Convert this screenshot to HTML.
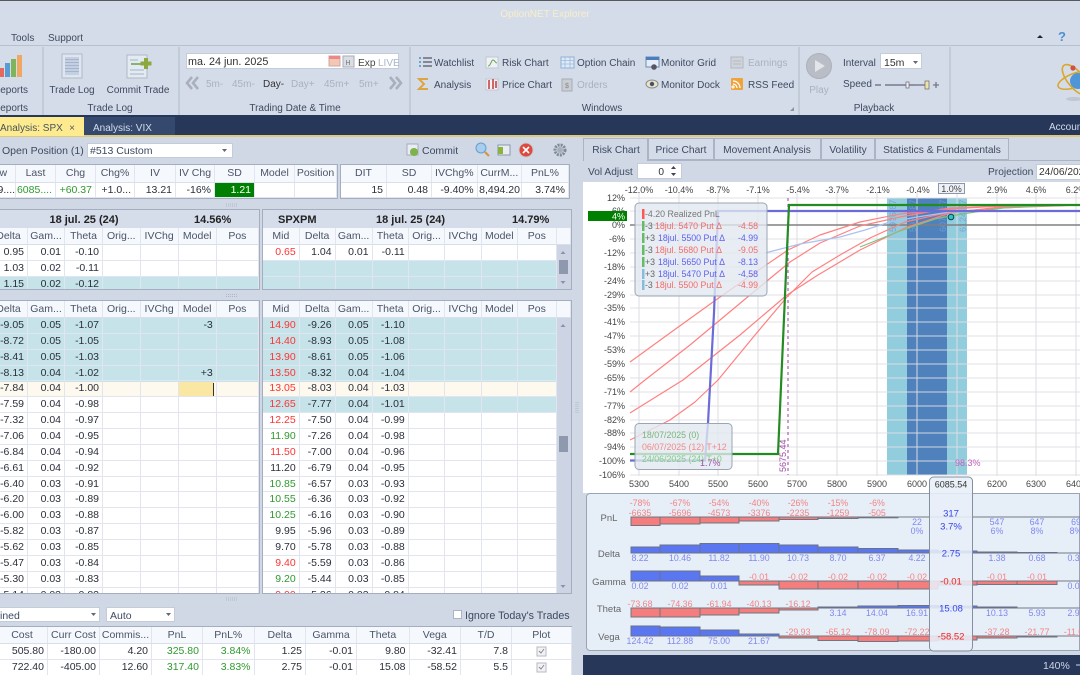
<!DOCTYPE html>
<html><head><meta charset="utf-8"><title>OptionNET Explorer</title>
<style>
html,body{margin:0;padding:0;width:1080px;height:675px;overflow:hidden;background:#d0d8e6}
body{position:relative;font-family:"Liberation Sans",sans-serif;font-size:10.5px;color:#2a2f3a}
#root{position:absolute;left:0;top:0;width:1080px;height:675px;overflow:hidden;filter:blur(.35px);background:#d0d8e6}
.a{position:absolute;box-sizing:border-box}
.g{position:absolute;display:grid}
.g>i{font-style:normal;text-align:right;padding-right:3px;line-height:15px;border-right:1px solid #e0e5f0;border-bottom:1px solid #e0e5f0;overflow:hidden;white-space:nowrap;box-sizing:border-box;color:#2a2f3a}
.h>i{text-align:center;padding:0;background:#f5f8fc;color:#4a5568;line-height:16px;border-bottom:1px solid #d8deea}
.g>b{font-weight:normal;text-align:right;padding-right:3px;line-height:15px;border-right:1px solid #e0e5f0;border-bottom:1px solid #e0e5f0;overflow:hidden;white-space:nowrap;box-sizing:border-box;color:#f33}
.g>u{text-decoration:none;text-align:right;padding-right:3px;line-height:15px;border-right:1px solid #e0e5f0;border-bottom:1px solid #e0e5f0;overflow:hidden;white-space:nowrap;box-sizing:border-box;color:#2e9a2e}
.p{border:1px solid #a4aebf;background:#fff;overflow:hidden}
svg{position:absolute;left:0;top:0}
text{font-family:"Liberation Sans",sans-serif}
.r{font-size:10px;fill:#3c4a60}
.d{font-size:10px;fill:#a9b1bf}
.k{font-size:9px;fill:#444}
.b{font-size:8.8px;fill:#8088f0}
.n{font-size:8.8px;fill:#f58484}
.l{font-size:9.5px;fill:#666}
.m{text-anchor:middle}
.e{text-anchor:end}
</style></head><body><div id="root">

<!-- base regions -->
<div class="a" style="left:0;top:0;width:1080px;height:1px;background:#55585f"></div>
<div class="a" style="left:0;top:1px;width:1080px;height:114px;background:#d5dce9"></div>
<div class="a" style="left:0;top:45px;width:1080px;height:1px;background:#b7c0cf"></div>
<div class="a" style="left:0;top:115px;width:1080px;height:20px;background:#27375a"></div>
<div class="a" style="left:0;top:135px;width:1080px;height:2px;background:#dcc97e"></div>
<div class="a" style="left:0;top:117px;width:84px;height:19px;background:#ffeb8f"></div>
<div class="a" style="left:84px;top:117px;width:91px;height:18px;background:#34496d"></div>

<!-- top grid 1 -->
<div class="a p" style="left:-1px;top:164px;width:339px;height:35px"></div>
<div class="g h" style="left:-20px;top:165px;grid-template-columns:36px 40px 40px 39px 41px 39px 40px 40px 42px;grid-template-rows:18px">
<i>Low</i><i>Last</i><i>Chg</i><i>Chg%</i><i>IV</i><i>IV Chg</i><i>SD</i><i>Model</i><i>Position</i></div>
<div class="g" style="left:-20px;top:183px;grid-template-columns:36px 40px 40px 39px 41px 39px 40px 40px 42px;grid-template-rows:15px">
<i>6079....</i><u>6085....</u><u>+60.37</u><i>+1.0...</i><i>13.21</i><i>-16%</i><i style="background:#008000;color:#fff">1.21</i><i></i><i></i></div>
<!-- top grid 2 -->
<div class="a p" style="left:340px;top:164px;width:230px;height:35px"></div>
<div class="g h" style="left:341px;top:165px;grid-template-columns:46px 45px 45.6px 44.4px 47px;grid-template-rows:18px">
<i>DIT</i><i>SD</i><i>IVChg%</i><i>CurrM...</i><i>PnL%</i></div>
<div class="g" style="left:341px;top:183px;grid-template-columns:46px 45px 45.6px 44.4px 47px;grid-template-rows:15px">
<i>15</i><i>0.48</i><i>-9.40%</i><i style="padding-right:1px">8,494.20</i><i>3.74%</i></div>

<!-- upper panel left -->
<div class="a p" style="left:-2px;top:209px;width:262px;height:81px"></div>
<div class="a" style="left:0;top:210px;width:259px;height:18px;background:#d5dcea"></div>
<div class="a" style="left:0;top:277px;width:259px;height:12px;background:#c5e3e8"></div>
<div class="g h" style="left:-10px;top:228px;grid-template-columns:38px 37px 38px 37.6px 38.1px 38.1px 42.2px;grid-template-rows:17px"><i>Delta</i><i>Gam...</i><i>Theta</i><i>Orig...</i><i>IVChg</i><i>Model</i><i>Pos</i></div>
<div class="a" style="left:-10px;top:245px;width:269px;height:44px;overflow:hidden"><div class="g" style="left:0;top:0;grid-template-columns:38px 37px 38px 37.6px 38.1px 38.1px 42.2px;grid-auto-rows:15.87px">
<i>0.95</i><i>0.01</i><i>-0.10</i><i></i><i></i><i></i><i></i>
<i>1.03</i><i>0.02</i><i>-0.11</i><i></i><i></i><i></i><i></i>
<i>1.15</i><i>0.02</i><i>-0.12</i><i></i><i></i><i></i><i></i>
</div></div>

<!-- upper panel right -->
<div class="a p" style="left:262px;top:209px;width:310px;height:81px"></div>
<div class="a" style="left:263px;top:210px;width:308px;height:18px;background:#d5dcea"></div>
<div class="a" style="left:263px;top:261px;width:294px;height:28px;background:#c5e3e8"></div>
<div class="a" style="left:557px;top:245px;width:14px;height:44px;background:#cdd5e4"></div>
<div class="g h" style="left:263px;top:228px;grid-template-columns:36.7px 35.9px 37px 36.2px 36.6px 36.3px 36.3px 38.8px 14px;grid-template-rows:17px"><i>Mid</i><i>Delta</i><i>Gam...</i><i>Theta</i><i>Orig...</i><i>IVChg</i><i>Model</i><i>Pos</i><i></i></div>
<div class="a" style="left:263px;top:245px;width:294px;height:44px;overflow:hidden"><div class="g" style="left:0;top:0;grid-template-columns:36.7px 35.9px 37px 36.2px 36.6px 36.3px 36.3px 38.8px;grid-auto-rows:15.87px">
<b>0.65</b><i>1.04</i><i>0.01</i><i>-0.11</i><i></i><i></i><i></i><i></i>
<i></i><i></i><i></i><i></i><i></i><i></i><i></i><i></i>
<i></i><i></i><i></i><i></i><i></i><i></i><i></i><i></i>
</div></div>

<!-- lower panel left -->
<div class="a p" style="left:-2px;top:300px;width:262px;height:294px"></div>
<div class="a" style="left:0;top:318px;width:259px;height:63.5px;background:#c5e3e8"></div>
<div class="a" style="left:0;top:381.5px;width:259px;height:15.9px;background:#fdf9ee"></div>
<div class="a" style="left:179px;top:381.5px;width:35px;height:15px;background:#fbe7a4"></div>
<div class="a" style="left:213px;top:382.5px;width:1px;height:13px;background:#333"></div>
<div class="g h" style="left:-10px;top:301px;grid-template-columns:38px 37px 38px 37.6px 38.1px 38.1px 42.2px;grid-template-rows:17px"><i>Delta</i><i>Gam...</i><i>Theta</i><i>Orig...</i><i>IVChg</i><i>Model</i><i>Pos</i></div>
<div class="a" style="left:-10px;top:318px;width:269px;height:275px;overflow:hidden"><div class="g" style="left:0;top:0;grid-template-columns:38px 37px 38px 37.6px 38.1px 38.1px 42.2px;grid-auto-rows:15.87px">
<i>-9.05</i><i>0.05</i><i>-1.07</i><i></i><i></i><i>-3</i><i></i>
<i>-8.72</i><i>0.05</i><i>-1.05</i><i></i><i></i><i></i><i></i>
<i>-8.41</i><i>0.05</i><i>-1.03</i><i></i><i></i><i></i><i></i>
<i>-8.13</i><i>0.04</i><i>-1.02</i><i></i><i></i><i>+3</i><i></i>
<i>-7.84</i><i>0.04</i><i>-1.00</i><i></i><i></i><i></i><i></i>
<i>-7.59</i><i>0.04</i><i>-0.98</i><i></i><i></i><i></i><i></i>
<i>-7.32</i><i>0.04</i><i>-0.97</i><i></i><i></i><i></i><i></i>
<i>-7.06</i><i>0.04</i><i>-0.95</i><i></i><i></i><i></i><i></i>
<i>-6.84</i><i>0.04</i><i>-0.94</i><i></i><i></i><i></i><i></i>
<i>-6.61</i><i>0.04</i><i>-0.92</i><i></i><i></i><i></i><i></i>
<i>-6.40</i><i>0.03</i><i>-0.91</i><i></i><i></i><i></i><i></i>
<i>-6.20</i><i>0.03</i><i>-0.89</i><i></i><i></i><i></i><i></i>
<i>-6.00</i><i>0.03</i><i>-0.88</i><i></i><i></i><i></i><i></i>
<i>-5.82</i><i>0.03</i><i>-0.87</i><i></i><i></i><i></i><i></i>
<i>-5.62</i><i>0.03</i><i>-0.85</i><i></i><i></i><i></i><i></i>
<i>-5.47</i><i>0.03</i><i>-0.84</i><i></i><i></i><i></i><i></i>
<i>-5.30</i><i>0.03</i><i>-0.83</i><i></i><i></i><i></i><i></i>
<i>-5.14</i><i>0.03</i><i>-0.82</i><i></i><i></i><i></i><i></i>
</div></div>

<!-- lower panel right -->
<div class="a p" style="left:262px;top:300px;width:310px;height:294px"></div>
<div class="a" style="left:263px;top:318px;width:294px;height:63.5px;background:#c5e3e8"></div>
<div class="a" style="left:263px;top:381.5px;width:294px;height:15.9px;background:#fdf9ee"></div>
<div class="a" style="left:263px;top:397.4px;width:294px;height:15.9px;background:#c5e3e8"></div>
<div class="a" style="left:557px;top:318px;width:14px;height:275px;background:#cdd5e4"></div>
<div class="g h" style="left:263px;top:301px;grid-template-columns:36.7px 35.9px 37px 36.2px 36.6px 36.3px 36.3px 38.8px 14px;grid-template-rows:17px"><i>Mid</i><i>Delta</i><i>Gam...</i><i>Theta</i><i>Orig...</i><i>IVChg</i><i>Model</i><i>Pos</i><i></i></div>
<div class="a" style="left:263px;top:318px;width:294px;height:275px;overflow:hidden"><div class="g" style="left:0;top:0;grid-template-columns:36.7px 35.9px 37px 36.2px 36.6px 36.3px 36.3px 38.8px;grid-auto-rows:15.87px">
<b>14.90</b><i>-9.26</i><i>0.05</i><i>-1.10</i><i></i><i></i><i></i><i></i>
<b>14.40</b><i>-8.93</i><i>0.05</i><i>-1.08</i><i></i><i></i><i></i><i></i>
<b>13.90</b><i>-8.61</i><i>0.05</i><i>-1.06</i><i></i><i></i><i></i><i></i>
<b>13.50</b><i>-8.32</i><i>0.04</i><i>-1.04</i><i></i><i></i><i></i><i></i>
<b>13.05</b><i>-8.03</i><i>0.04</i><i>-1.03</i><i></i><i></i><i></i><i></i>
<b>12.65</b><i>-7.77</i><i>0.04</i><i>-1.01</i><i></i><i></i><i></i><i></i>
<b>12.25</b><i>-7.50</i><i>0.04</i><i>-0.99</i><i></i><i></i><i></i><i></i>
<u>11.90</u><i>-7.26</i><i>0.04</i><i>-0.98</i><i></i><i></i><i></i><i></i>
<b>11.50</b><i>-7.00</i><i>0.04</i><i>-0.96</i><i></i><i></i><i></i><i></i>
<i>11.20</i><i>-6.79</i><i>0.04</i><i>-0.95</i><i></i><i></i><i></i><i></i>
<u>10.85</u><i>-6.57</i><i>0.03</i><i>-0.93</i><i></i><i></i><i></i><i></i>
<u>10.55</u><i>-6.36</i><i>0.03</i><i>-0.92</i><i></i><i></i><i></i><i></i>
<u>10.25</u><i>-6.16</i><i>0.03</i><i>-0.90</i><i></i><i></i><i></i><i></i>
<i>9.95</i><i>-5.96</i><i>0.03</i><i>-0.89</i><i></i><i></i><i></i><i></i>
<i>9.70</i><i>-5.78</i><i>0.03</i><i>-0.88</i><i></i><i></i><i></i><i></i>
<b>9.40</b><i>-5.59</i><i>0.03</i><i>-0.86</i><i></i><i></i><i></i><i></i>
<u>9.20</u><i>-5.44</i><i>0.03</i><i>-0.85</i><i></i><i></i><i></i><i></i>
<b>9.00</b><i>-5.26</i><i>0.03</i><i>-0.84</i><i></i><i></i><i></i><i></i>
</div></div>

<!-- bottom table -->
<div class="a" style="left:0;top:626px;width:572px;height:49px;background:#fff;border:1px solid #a4aebf;border-left:0;border-bottom:0"></div>
<div class="g h" style="left:-3px;top:627px;grid-template-columns:51px 52px 52px 51px 51.5px 51.5px 51px 52.5px 51.5px 51px 59.5px;grid-template-rows:17px"><i>Cost</i><i>Curr Cost</i><i>Commis...</i><i>PnL</i><i>PnL%</i><i>Delta</i><i>Gamma</i><i>Theta</i><i>Vega</i><i>T/D</i><i>Plot</i></div>
<div class="g" style="left:-3px;top:644px;grid-template-columns:51px 52px 52px 51px 51.5px 51.5px 51px 52.5px 51.5px 51px 59.5px;grid-auto-rows:16px">
<i>505.80</i><i>-180.00</i><i>4.20</i><u>325.80</u><u>3.84%</u><i>1.25</i><i>-0.01</i><i>9.80</i><i>-32.41</i><i>7.8</i><i></i>
<i>722.40</i><i>-405.00</i><i>12.60</i><u>317.40</u><u>3.83%</u><i>2.75</i><i>-0.01</i><i>15.08</i><i>-58.52</i><i>5.5</i><i></i>
</div>

<!-- right panel bases -->
<div class="a" style="left:583px;top:182px;width:497px;height:311px;background:#fff"></div>
<div class="a" style="left:583px;top:160px;width:497px;height:1px;background:#aab4c4"></div>
<div class="a" style="left:583px;top:138px;width:65px;height:23px;background:#d0d8e6;border:1px solid #aab4c4;border-bottom:0"></div>
<div class="a" style="left:648px;top:138px;width:66px;height:22px;background:#d5dce9;border:1px solid #aab4c4"></div>
<div class="a" style="left:714px;top:138px;width:107px;height:22px;background:#d5dce9;border:1px solid #aab4c4"></div>
<div class="a" style="left:821px;top:138px;width:54px;height:22px;background:#d5dce9;border:1px solid #aab4c4"></div>
<div class="a" style="left:875px;top:138px;width:134px;height:22px;background:#d5dce9;border:1px solid #aab4c4"></div>
<div class="a" style="left:637px;top:163px;width:45px;height:16px;background:#fff;border:1px solid #c4ccd9"></div>
<div class="a" style="left:1036px;top:164px;width:50px;height:16px;background:#fff;border:1px solid #c4ccd9"></div>
<div class="a" style="left:586px;top:493px;width:494px;height:158px;background:#e6eef8;border:1px solid #9aa4b4;border-radius:4px 0 0 4px"></div>
<div class="a" style="left:583px;top:655px;width:497px;height:20px;background:#27375a"></div>

<!-- form boxes -->
<div class="a" style="left:186px;top:53px;width:213px;height:16px;background:#fff;border:1px solid #c4ccd9"></div>
<div class="a" style="left:880px;top:53px;width:42px;height:16px;background:#fff;border:1px solid #c4ccd9"></div>
<div class="a" style="left:87px;top:143px;width:146px;height:15px;background:#fff;border:1px solid #c4ccd9"></div>
<div class="a" style="left:-2px;top:607px;width:102px;height:15px;background:#fff;border:1px solid #c4ccd9"></div>
<div class="a" style="left:106px;top:607px;width:69px;height:15px;background:#fff;border:1px solid #c4ccd9"></div>
<div class="a" style="left:453px;top:610px;width:9px;height:9px;background:#fff;border:1px solid #aab4c4"></div>

<svg width="1080" height="675" viewBox="0 0 1080 675">
<!-- title / menu -->
<text x="545" y="17" class="m" font-size="10" fill="#f6eecb">OptionNET Explorer</text>
<text x="11" y="41" class="r">Tools</text><text x="48" y="41" class="r">Support</text>
<path d="M1037 38h6l-3-3z" fill="#222"/>
<text x="1062" y="41" class="m" font-size="13" font-weight="bold" fill="#4d8fd0">?</text>

<!-- ribbon separators -->
<path d="M43 47V115M179 47V115M410 47V115M799 47V115M950 47V115" stroke="#bcc5d3" stroke-width="1.5"/>
<!-- reports icon -->
<rect x="-1" y="68" width="5" height="9" fill="#e56a5d"/><rect x="5" y="63" width="5" height="14" fill="#5a9bd3"/>
<rect x="11" y="59" width="5" height="18" fill="#7eb55a"/><rect x="17" y="55" width="5" height="22" fill="#f0a860"/>
<text x="-7" y="93" class="r">Reports</text><text x="-7" y="111" class="r">Reports</text>
<!-- trade log icon -->
<rect x="62" y="54" width="20" height="24" fill="#dfe6f0" stroke="#aeb8c8"/>
<rect x="65" y="57" width="14" height="18" fill="#c4d0e2"/>
<path d="M65 59.500h14M65 62.500h14M65 65.500h14M65 68.500h14M65 71.500h14" stroke="#a3b4cf" stroke-width="1"/>
<text x="72" y="93" class="r m">Trade Log</text>
<!-- commit trade icon -->
<rect x="127" y="55" width="20" height="23" fill="#e4eaf2" stroke="#aeb8c8"/>
<path d="M130 70h14M130 74h14M130 60h8" stroke="#b0bfd2" stroke-width="1.2"/>
<path d="M131 64h10" stroke="#6aa04a" stroke-width="1.5"/>
<path d="M146 58v11M140.500 63.500h11" stroke="#8fa83e" stroke-width="4"/>
<text x="138" y="93" class="r m">Commit Trade</text>
<text x="110" y="111" class="r m">Trade Log</text>

<!-- trading date -->
<text x="188" y="65" font-size="10.8" fill="#333">ma. 24 jun. 2025</text>
<rect x="329" y="56" width="11" height="10" fill="#f4c6b4" stroke="#c9a9a4"/><rect x="329" y="56" width="11" height="3" fill="#e88"/>
<rect x="343" y="56" width="11" height="11" fill="#d9dde4" stroke="#aab"/><text x="348" y="65" class="m" font-size="7" fill="#777">H</text>
<text x="358" y="66" font-size="10.200" fill="#444">Exp</text><text x="378" y="66" font-size="10" fill="#a9b5c9">LIVE</text>
<path d="M192 77l-5 6 5 6M198 77l-5 6 5 6" fill="none" stroke="#a9b0bc" stroke-width="2.600"/>
<path d="M390 77l5 6-5 6M396 77l5 6-5 6" fill="none" stroke="#a9b0bc" stroke-width="2.600"/>
<text x="206" y="87" class="d">5m-</text><text x="232" y="87" class="d">45m-</text><text x="263" y="87" class="r" style="fill:#333">Day-</text>
<text x="291" y="87" class="d">Day+</text><text x="324" y="87" class="d">45m+</text><text x="359" y="87" class="d">5m+</text>
<text x="295" y="111" class="r m">Trading Date &amp; Time</text>

<!-- windows -->
<path d="M423 58h9M423 62h9M423 66h9" stroke="#556" stroke-width="1.200"/><path d="M419 58h2M419 62h2M419 66h2" stroke="#4a90c8" stroke-width="1.500"/>
<text x="434" y="66" class="r">Watchlist</text>
<path d="M428 79h-9l5 5-5 5h9" fill="none" stroke="#dba640" stroke-width="2"/>
<text x="434" y="88" class="r">Analysis</text>
<rect x="486" y="57" width="12" height="11" fill="#eef1f6" stroke="#c1c8d4"/><path d="M488 66c3 0 3-6 5-6s2 3 4 3" fill="none" stroke="#6aa04a"/>
<text x="502" y="66" class="r">Risk Chart</text>
<rect x="486" y="79" width="12" height="11" fill="#eef1f6" stroke="#c1c8d4"/><path d="M489 80v9M493 79v10M496 81v7" stroke="#c44" stroke-width="1.600"/>
<text x="502" y="88" class="r">Price Chart</text>
<rect x="561" y="57" width="13" height="11" fill="#dfeaf7" stroke="#8fb0d6"/><path d="M561 60.500h13M565 57v11M570 57v11M561 64h13" stroke="#9cb9da" stroke-width=".8"/>
<text x="577" y="66" class="r">Option Chain</text>
<rect x="562" y="79" width="10" height="12" fill="#c9cdd4" stroke="#a8adb5"/><text x="567" y="88" class="m" font-size="7" fill="#888">$</text>
<text x="577" y="88" class="d">Orders</text>
<rect x="646" y="57" width="13" height="10" fill="#e4edf7" stroke="#6b8cb5"/><rect x="646" y="57" width="13" height="3" fill="#4a7ebc"/><circle cx="654" cy="67" r="2.800" fill="#556"/>
<text x="661" y="66" class="r">Monitor Grid</text>
<ellipse cx="652" cy="84" rx="6" ry="4" fill="#e8e3d3" stroke="#8c8a7e"/><circle cx="652" cy="84" r="2.200" fill="#456"/>
<text x="661" y="88" class="r">Monitor Dock</text>
<rect x="731" y="57" width="12" height="11" fill="#d0d4da" stroke="#b3b8c0"/><path d="M733 61h8M733 64h8" stroke="#b3b8c0"/>
<text x="748" y="66" class="d">Earnings</text>
<rect x="731" y="78" width="12" height="12" rx="1" fill="#eea43a"/><path d="M733 88a1 1 0 1 1 .1 0M733 84a4 4 0 0 1 4 4M733 81a7 7 0 0 1 7 7" fill="none" stroke="#fff" stroke-width="1.200"/>
<text x="748" y="88" class="r">RSS Feed</text>
<text x="602" y="111" class="r m">Windows</text>
<path d="M794 111h-4l4-4z" fill="#8a94a5"/>

<!-- playback -->
<circle cx="819" cy="66" r="12.500" fill="#b9bdc6" stroke="#adb1ba"/><path d="M815 60l10 6-10 6z" fill="#e3e5ea"/>
<text x="819" y="93" class="d m">Play</text>
<text x="843" y="66" class="r">Interval</text><text x="884" y="66" font-size="10.500" fill="#333">15m</text><path d="M913 61h5l-2.500 3z" fill="#667"/>
<text x="843" y="87" class="r">Speed</text>
<path d="M875 85h6M885 85h30" stroke="#667" stroke-width="1.200"/><path d="M933 85h6M936 82v6" stroke="#778" stroke-width="1.300"/>
<rect x="906" y="82" width="3" height="6" fill="#eee" stroke="#667" stroke-width=".7"/><rect x="925" y="81" width="4" height="8" fill="#f0e3a0" stroke="#667" stroke-width=".7"/>
<path d="M915 85h10" stroke="#667" stroke-width="1.200"/>
<text x="874" y="111" class="r m">Playback</text>
<!-- atom logo -->
<ellipse cx="1076" cy="80" rx="19" ry="8" transform="rotate(50 1076 80)" fill="none" stroke="#d9a72a" stroke-width="1.600"/>
<ellipse cx="1076" cy="80" rx="19" ry="7" transform="rotate(-20 1076 80)" fill="none" stroke="#d9a72a" stroke-width="1.600"/>
<circle cx="1078" cy="81" r="8" fill="#4f96d8"/><circle cx="1073" cy="68" r="2.600" fill="#d3503c"/>
<ellipse cx="1074" cy="99" rx="8" ry="2" fill="#c0c6d2"/>

<!-- tabs bar -->
<text x="0" y="131" font-size="10" fill="#44545f">Analysis: SPX</text>
<text x="72" y="131" class="m" font-size="10" fill="#556">×</text>
<text x="93" y="131" font-size="10" fill="#d3dcea">Analysis: VIX</text>
<text x="1049" y="130" font-size="10" fill="#d3dcea">Account</text>

<!-- position toolbar -->
<text x="2" y="154" font-size="10.500" fill="#3c4a60">Open Position (1)</text>
<text x="90" y="154" font-size="10.500" fill="#3c4a60">#513 Custom</text><path d="M222 149h5l-2.500 3z" fill="#667"/>
<rect x="407" y="144" width="11" height="11" fill="#e8ecf3" stroke="#aab"/><circle cx="414" cy="152" r="4" fill="#7db24c"/>
<text x="422" y="154" font-size="10.500" fill="#3c4a60">Commit</text>
<circle cx="481" cy="148" r="5" fill="#a7cdef" stroke="#6a9dcc"/><path d="M485 152l4 4" stroke="#d59640" stroke-width="2.200"/>
<rect x="498" y="145" width="12" height="10" fill="#e9ecf2" stroke="#8a97a8"/><rect x="498" y="147" width="5" height="7" fill="#8cb33e"/>
<circle cx="526" cy="150" r="7" fill="#dc4a40" stroke="#c9c9c9"/><path d="M523 147l6 6M529 147l-6 6" stroke="#fff" stroke-width="1.600"/>
<circle cx="560" cy="150" r="5" fill="none" stroke="#7f8997" stroke-width="3" stroke-dasharray="2 1"/><circle cx="560" cy="150" r="3" fill="#a6afbc"/>

<!-- panel titles -->
<g font-size="11" font-weight="bold" fill="#222">
<text x="84" y="223" class="m">18 jul. 25 (24)</text><text x="194" y="223">14.56%</text>
<text x="278" y="223">SPXPM</text><text x="376" y="223">18 jul. 25 (24)</text><text x="512" y="223">14.79%</text></g>
<!-- scrollbars -->
<path d="M560.500 254h5l-2.500-3z" fill="#8a94a5"/><rect x="559" y="260" width="9" height="14" fill="#8f99ad"/><path d="M560.500 281h5l-2.500 3z" fill="#8a94a5"/>
<path d="M560.500 327h5l-2.500-3z" fill="#8a94a5"/><rect x="559" y="436" width="9" height="16" fill="#8f99ad"/><path d="M560.500 585h5l-2.500 3z" fill="#8a94a5"/>
<!-- splitter grips -->
<path d="M226 204h12M226 206h12M226 294.500h12M226 296.500h12M226 598h12M226 600h12" stroke="#aeb7c6" stroke-dasharray="1 1"/>
<path d="M576 402v12M578 402v12" stroke="#aeb7c6" stroke-dasharray="1 1"/>
<!-- combos text -->
<text x="0" y="619" font-size="10.500" fill="#3c4a60">ined</text><path d="M91 613h5l-2.500 3z" fill="#667"/>
<text x="110" y="619" font-size="10.500" fill="#3c4a60">Auto</text><path d="M166 613h5l-2.500 3z" fill="#667"/>
<text x="465" y="619" font-size="10.700" fill="#3c4a60">Ignore Today's Trades</text>
<!-- check boxes -->
<rect x="537" y="647" width="9" height="9" fill="#f3f3f5" stroke="#b4bac6"/><path d="M539 651l2 2 3-4" fill="none" stroke="#888"/>
<rect x="537" y="663" width="9" height="9" fill="#f3f3f5" stroke="#b4bac6"/><path d="M539 667l2 2 3-4" fill="none" stroke="#888"/>

<!-- right tabs text -->
<g font-size="10.200" fill="#3c4a60">
<text x="616" y="153" class="m">Risk Chart</text><text x="681" y="153" class="m">Price Chart</text><text x="767" y="153" class="m">Movement Analysis</text><text x="848" y="153" class="m">Volatility</text><text x="942" y="153" class="m">Statistics &amp; Fundamentals</text>
<text x="588" y="175">Vol Adjust</text><text x="664" y="175" class="e" fill="#333">0</text><text x="988" y="175">Projection</text><text x="1039" y="175" fill="#333">24/06/2025</text></g>
<path d="M671 169h5l-2.500-3zM671 173h5l-2.500 3z" fill="#445"/>

<!-- CHART -->
<rect x="887" y="198" width="80" height="277" fill="#92cddd"/>
<rect x="907" y="198" width="40" height="277" fill="#4f81bd"/>
<path d="M630 198H1080M630 211H1080M630 239H1080M630 253H1080M630 267H1080M630 281H1080M630 295H1080M630 308H1080M630 322H1080M630 336H1080M630 350H1080M630 364H1080M630 378H1080M630 392H1080M630 406H1080M630 420H1080M630 433H1080M630 447H1080M630 461H1080M630 475H1080" stroke="#dddde3" stroke-opacity=".75" stroke-width="1.300"/>
<path d="M639 192V476M679 192V476M718 192V476M758 192V476M797 192V476M837 192V476M877 192V476M917 192V476M957 192V476M997 192V476M1036 192V476M1076 192V476" stroke="#dddde3" stroke-opacity=".75" stroke-width="1.300"/>
<g font-size="9" fill="#6f9fd0" opacity=".85">
<text transform="translate(896,232) rotate(-90)">5926.87</text>
<text transform="translate(916,232) rotate(-90)">5976.87</text>
<text transform="translate(946,232) rotate(-90)">6074.87</text>
<text transform="translate(966,232) rotate(-90)">6124.87</text></g>
<path d="M630 225H1080" stroke="#808080" stroke-width="1.400"/>
<path d="M788 198V475" stroke="#b45fb4" stroke-width="1.200" stroke-dasharray="3 3"/>
<!-- red curves -->
<g fill="none" stroke="#ff8080" stroke-width="1.200" stroke-linejoin="round">
<polyline points="630,362 670,333 713,302 750,276 788,250 820,235 860,222 900,214 950,209 1000,206 1080,205"/>
<polyline points="630,392 645,380 690,345 750,295 790,262 820,243 860,226 900,217 950,208 1000,206 1080,205"/>
<polyline points="630,413 683,380 740,335 787,295 818,275 860,250 905,228 950,213 1000,207 1080,205"/>
<polyline points="630,440 670,420 695,402 718,380 755,335 787,297 812,272 840,255 870,238 905,222 950,212 1000,208 1080,205"/>
</g>
<polyline points="765,253 800,244 840,237 865,230 890,222 917,217 950,212 1000,211 1080,211" fill="none" stroke="#aac2f0" stroke-width="1.200"/>
<polyline points="860,247 880,239 900,231 917,225 935,219 950,216 975,212 1003,208 1040,206 1080,205" fill="none" stroke="#7ec27e" stroke-width="1.200"/>
<!-- main lines -->
<path d="M630 460.500H705L708 423 714 313 718 211H1080" fill="none" stroke="#6c6cd8" stroke-width="2.200"/>
<path d="M630 454H778L789 205H1080" fill="none" stroke="#228b22" stroke-width="2.200"/>
<circle cx="951" cy="217" r="2.800" fill="#2cc4c4" stroke="#144"/>
<!-- top labels -->
<text x="639" y="193" class="k m">-12.0%</text><text x="679" y="193" class="k m">-10.4%</text><text x="718" y="193" class="k m">-8.7%</text><text x="758" y="193" class="k m">-7.1%</text><text x="798" y="193" class="k m">-5.4%</text><text x="837" y="193" class="k m">-3.7%</text><text x="878" y="193" class="k m">-2.1%</text><text x="918" y="193" class="k m">-0.4%</text>
<text x="997" y="193" class="k m">2.9%</text><text x="1036" y="193" class="k m">4.6%</text><text x="1076" y="193" class="k m">6.2%</text>
<rect x="938.500" y="183.500" width="26" height="10" fill="#eef2f8" stroke="#8d97a9"/><text x="951.500" y="192" class="k m">1.0%</text>
<!-- y labels -->
<text x="625" y="201" class="k e">12%</text><text x="625" y="214" class="k e">6%</text><text x="625" y="228" class="k e">0%</text><text x="625" y="242" class="k e">-6%</text><text x="625" y="256" class="k e">-12%</text><text x="625" y="270" class="k e">-18%</text><text x="625" y="284" class="k e">-24%</text><text x="625" y="298" class="k e">-29%</text><text x="625" y="311" class="k e">-35%</text><text x="625" y="325" class="k e">-41%</text><text x="625" y="339" class="k e">-47%</text><text x="625" y="353" class="k e">-53%</text><text x="625" y="367" class="k e">-59%</text><text x="625" y="381" class="k e">-65%</text><text x="625" y="395" class="k e">-71%</text><text x="625" y="409" class="k e">-77%</text><text x="625" y="423" class="k e">-82%</text><text x="625" y="436" class="k e">-88%</text><text x="625" y="450" class="k e">-94%</text><text x="625" y="464" class="k e">-100%</text><text x="625" y="478" class="k e">-106%</text>
<rect x="588" y="211" width="39" height="10" fill="#008000"/><text x="625" y="219.500" class="k e" style="fill:#fff">4%</text>
<!-- x labels -->
<text x="639" y="487" class="k m">5300</text><text x="679" y="487" class="k m">5400</text><text x="718" y="487" class="k m">5500</text><text x="758" y="487" class="k m">5600</text><text x="797" y="487" class="k m">5700</text><text x="837" y="487" class="k m">5800</text><text x="877" y="487" class="k m">5900</text><text x="917" y="487" class="k m">6000</text><text x="997" y="487" class="k m">6200</text><text x="1036" y="487" class="k m">6300</text><text x="1076" y="487" class="k m">6400</text>
<text x="955" y="466" font-size="9" fill="#c060c0">98.3%</text>

<!-- legend 1 -->
<rect x="635" y="203" width="132" height="93" rx="4" fill="#e1e8f0" fill-opacity=".8" stroke="#9aa5b5"/>
<rect x="642" y="209" width="2.500" height="10" fill="#f55"/><rect x="642" y="221" width="2.500" height="10" fill="#6b6"/><rect x="642" y="233" width="2.500" height="10" fill="#6b6"/><rect x="642" y="245" width="2.500" height="10" fill="#6b6"/><rect x="642" y="257" width="2.500" height="10" fill="#6b6"/><rect x="642" y="269" width="2.500" height="10" fill="#8bd"/><rect x="642" y="280" width="2.500" height="10" fill="#8bd"/>
<g font-size="8.800">
<text x="645" y="217" fill="#777">-4.20 Realized PnL</text>
<text x="645" y="229" fill="#666">-3</text><text x="655" y="229" fill="#f46a6a">18jul. 5470 Put Δ</text><text x="758" y="229" class="e" fill="#f46a6a">-4.58</text>
<text x="645" y="241" fill="#666">+3</text><text x="658" y="241" fill="#6060ee">18jul. 5500 Put Δ</text><text x="758" y="241" class="e" fill="#6060ee">-4.99</text>
<text x="645" y="253" fill="#666">-3</text><text x="655" y="253" fill="#f46a6a">18jul. 5680 Put Δ</text><text x="758" y="253" class="e" fill="#f46a6a">-9.05</text>
<text x="645" y="265" fill="#666">+3</text><text x="658" y="265" fill="#6060ee">18jul. 5650 Put Δ</text><text x="758" y="265" class="e" fill="#6060ee">-8.13</text>
<text x="645" y="277" fill="#666">+3</text><text x="658" y="277" fill="#6060ee">18jul. 5470 Put Δ</text><text x="758" y="277" class="e" fill="#6060ee">-4.58</text>
<text x="645" y="288" fill="#666">-3</text><text x="655" y="288" fill="#f46a6a">18jul. 5500 Put Δ</text><text x="758" y="288" class="e" fill="#f46a6a">-4.99</text>
</g>
<!-- legend 2 -->
<rect x="635" y="423.500" width="97" height="46" rx="4" fill="#e1e8f0" fill-opacity=".8" stroke="#9aa5b5"/>
<g font-size="8.800">
<text x="642" y="438" fill="#7bb57b">18/07/2025 (0)</text>
<text x="642" y="450" fill="#f48a8a">06/07/2025 (12) T+12</text>
<text x="642" y="462" fill="#7fcf7f">24/06/2025 (24) T+0</text></g>
<text transform="translate(786,472) rotate(-90)" font-size="9" fill="#a050a8">5675.44</text>
<text x="700" y="466" font-size="9" fill="#a050a8">1.7%</text>

<!-- bottom chart bars -->
<g stroke="#70757f" stroke-width="1" fill="#f47d7d">
<rect x="631" y="517" width="29" height="8.500"/><rect x="660" y="517" width="40" height="7"/><rect x="700" y="517" width="39" height="6"/><rect x="739" y="517" width="40" height="4"/><rect x="779" y="517" width="39" height="2.500"/><rect x="818" y="517" width="40" height="1.500"/><rect x="858" y="517" width="40" height=".8"/>
<rect x="739" y="581" width="40" height="4"/><rect x="779" y="581" width="39" height="8"/><rect x="818" y="581" width="40" height="8"/><rect x="858" y="581" width="40" height="8"/><rect x="898" y="581" width="40" height="8"/><rect x="938" y="581" width="39" height="4"/><rect x="977" y="581" width="40" height="3.500"/><rect x="1017" y="581" width="40" height="3.500"/>
<rect x="631" y="608" width="29" height="9"/><rect x="660" y="608" width="40" height="9"/><rect x="700" y="608" width="39" height="7"/><rect x="739" y="608" width="40" height="5"/><rect x="779" y="608" width="39" height="2"/>
<rect x="779" y="636" width="39" height="2"/><rect x="818" y="636" width="40" height="4.500"/><rect x="858" y="636" width="40" height="5.500"/><rect x="898" y="636" width="40" height="5"/><rect x="938" y="636" width="39" height="4"/><rect x="977" y="636" width="40" height="2"/><rect x="1017" y="636" width="40" height="1"/>
</g>
<g stroke="#6a7288" stroke-width="1" fill="#5a76f0">
<rect x="631" y="547" width="29" height="6"/><rect x="660" y="545" width="40" height="8"/><rect x="700" y="543.500" width="39" height="9.500"/><rect x="739" y="543.500" width="40" height="9.500"/><rect x="779" y="545" width="39" height="8"/><rect x="818" y="547" width="40" height="6"/><rect x="858" y="548.500" width="40" height="4.500"/><rect x="898" y="550" width="40" height="3"/><rect x="938" y="551" width="39" height="2"/><rect x="977" y="552" width="40" height="1"/><rect x="1017" y="552.500" width="40" height=".5"/>
<rect x="631" y="571" width="29" height="10"/><rect x="660" y="571" width="40" height="10"/><rect x="700" y="576" width="39" height="5"/>
<rect x="818" y="607" width="40" height="1"/><rect x="858" y="606" width="40" height="2"/><rect x="898" y="605.500" width="40" height="2.500"/><rect x="938" y="606" width="39" height="2"/><rect x="977" y="607" width="40" height="1"/>
<rect x="631" y="626" width="29" height="10"/><rect x="660" y="627" width="40" height="9"/><rect x="700" y="630" width="39" height="6"/><rect x="739" y="634" width="40" height="2"/>
</g>
<path d="M898 517H1080M1057 553H1080M1057 581H1080M1017 608H1080M1057 636H1080" stroke="#757a85" stroke-width="1"/>
<!-- bottom chart labels -->
<text x="609" y="521" class="l m">PnL</text><text x="609" y="557" class="l m">Delta</text><text x="609" y="585" class="l m">Gamma</text><text x="609" y="612" class="l m">Theta</text><text x="609" y="640" class="l m">Vega</text>
<text x="640" y="506" class="n m">-78%</text><text x="680" y="506" class="n m">-67%</text><text x="719" y="506" class="n m">-54%</text><text x="759" y="506" class="n m">-40%</text><text x="798" y="506" class="n m">-26%</text><text x="838" y="506" class="n m">-15%</text><text x="877" y="506" class="n m">-6%</text>
<text x="640" y="516" class="n m">-6635</text><text x="680" y="516" class="n m">-5696</text><text x="719" y="516" class="n m">-4573</text><text x="759" y="516" class="n m">-3376</text><text x="798" y="516" class="n m">-2235</text><text x="838" y="516" class="n m">-1259</text><text x="877" y="516" class="n m">-505</text>
<text x="917" y="525" class="b m">22</text><text x="917" y="534" class="b m">0%</text><text x="997" y="525" class="b m">547</text><text x="997" y="534" class="b m">6%</text><text x="1037" y="525" class="b m">647</text><text x="1037" y="534" class="b m">8%</text><text x="1076" y="525" class="b m">69</text><text x="1076" y="534" class="b m">8%</text>
<text x="640" y="561" class="b m">8.22</text><text x="680" y="561" class="b m">10.46</text><text x="719" y="561" class="b m">11.82</text><text x="759" y="561" class="b m">11.90</text><text x="798" y="561" class="b m">10.73</text><text x="838" y="561" class="b m">8.70</text><text x="877" y="561" class="b m">6.37</text><text x="917" y="561" class="b m">4.22</text><text x="997" y="561" class="b m">1.38</text><text x="1037" y="561" class="b m">0.68</text><text x="1076" y="561" class="b m">0.32</text>
<text x="640" y="589" class="b m">0.02</text><text x="680" y="589" class="b m">0.02</text><text x="719" y="589" class="b m">0.01</text><text x="759" y="580" class="n m">-0.01</text><text x="798" y="580" class="n m">-0.02</text><text x="838" y="580" class="n m">-0.02</text><text x="877" y="580" class="n m">-0.02</text><text x="917" y="580" class="n m">-0.02</text><text x="997" y="580" class="n m">-0.01</text><text x="1037" y="580" class="n m">-0.01</text><text x="1076" y="589" class="b m">0.00</text>
<text x="640" y="607" class="n m">-73.68</text><text x="680" y="607" class="n m">-74.36</text><text x="719" y="607" class="n m">-61.94</text><text x="759" y="607" class="n m">-40.13</text><text x="798" y="607" class="n m">-16.12</text><text x="838" y="616" class="b m">3.14</text><text x="877" y="616" class="b m">14.04</text><text x="917" y="616" class="b m">16.91</text><text x="997" y="616" class="b m">10.13</text><text x="1037" y="616" class="b m">5.93</text><text x="1076" y="616" class="b m">2.90</text>
<text x="640" y="644" class="b m">124.42</text><text x="680" y="644" class="b m">112.88</text><text x="719" y="644" class="b m">75.00</text><text x="759" y="644" class="b m">21.67</text><text x="798" y="635" class="n m">-29.93</text><text x="838" y="635" class="n m">-65.12</text><text x="877" y="635" class="n m">-78.09</text><text x="917" y="635" class="n m">-72.22</text><text x="997" y="635" class="n m">-37.28</text><text x="1037" y="635" class="n m">-21.77</text><text x="1076" y="635" class="n m">-11.00</text>
<!-- price box -->
<rect x="929.500" y="477" width="43" height="174" rx="4" fill="#e8eff8" fill-opacity=".88" stroke="#858fa0"/>
<text x="951" y="487.500" class="k m" style="fill:#333">6085.54</text>
<g font-size="9.500" fill="#3344ee">
<text x="951" y="516.500" class="m">317</text><text x="951" y="529.500" class="m">3.7%</text><text x="951" y="556.500" class="m">2.75</text><text x="951" y="611.500" class="m">15.08</text></g>
<text x="951" y="584.500" class="m" font-size="9.500" fill="#f02020">-0.01</text>
<text x="951" y="639.500" class="m" font-size="9.500" fill="#f02020">-58.52</text>
<!-- footer -->
<text x="1043" y="669" font-size="10.500" fill="#cfd6e4">140%</text>
<path d="M1076 665h5" stroke="#cfd6e4"/>
</svg>
</div></body></html>
